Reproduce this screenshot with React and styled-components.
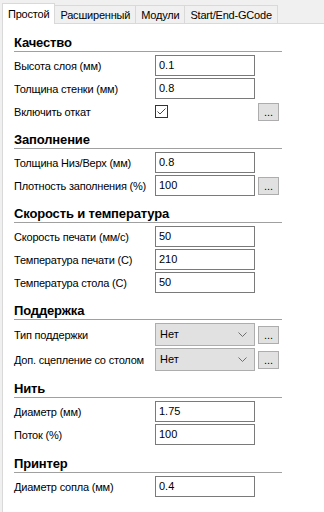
import React from "react";
import styled, { createGlobalStyle } from "styled-components";

const Global = createGlobalStyle`
  html, body { margin: 0; padding: 0; }
  body { font-family: "Liberation Sans", Arial, sans-serif; font-size: 11px; color: #000; background: #f0f0f0; }
`;

const Window = styled.div`
  height: 512px;
  overflow: hidden;
  background: #f0f0f0;
  padding: 2px 0 0 2px;
  box-sizing: border-box;
  display: flex;
  flex-direction: column;
`;

const TabBar = styled.div`
  display: flex;
  align-items: flex-end;
  height: 21px;
  border-bottom: 1px solid #d9d9d9;
  position: relative;
  z-index: 1;
`;

const Tab = styled.div`
  box-sizing: border-box;
  height: ${(p) => (p.$active ? "21px" : "18px")};
  margin-bottom: ${(p) => (p.$active ? "-1px" : "0")};
  margin-left: ${(p) => (p.$first ? "0" : "-1px")};
  padding: ${(p) => (p.$active ? "3px 5px 0 5px" : "2px 5px 0 5px")};
  border: 1px solid #d9d9d9;
  border-bottom: none;
  background: ${(p) => (p.$active ? "#ffffff" : "#f0f0f0")};
  font-size: 11px;
  letter-spacing: -0.2px;
  line-height: 14px;
  white-space: nowrap;
  position: relative;
  z-index: ${(p) => (p.$active ? 2 : 1)};
`;

const Panel = styled.div`
  flex: 1;
  background: #ffffff;
  border-left: 1px solid #d9d9d9;
  padding: 12px 0 0 11px;
`;

const Section = styled.section`
  display: flex;
  flex-direction: column;
  gap: 2px;
  margin-bottom: ${(p) => (p.$loose ? "12px" : "11px")};
`;

const Heading = styled.h3`
  margin: 0 0 1px 0;
  width: 268px;
  font-size: 13px;
  letter-spacing: -0.15px;
  font-weight: bold;
  line-height: 13px;
  padding-bottom: 2px;
  border-bottom: 1px solid #a0a0a0;
`;

const Row = styled.div`
  display: flex;
  align-items: center;
  height: ${(p) => (p.$tall ? "23px" : "21px")};
`;

const Label = styled.span`
  width: 141px;
  font-size: 11px;
  letter-spacing: -0.2px;
  white-space: nowrap;
`;

const Input = styled.div`
  box-sizing: border-box;
  width: 100px;
  height: 21px;
  border: 1px solid #7a7a7a;
  background: #fff;
  padding: 0 0 0 3px;
  font-size: 11px;
  line-height: 19px;
`;

const Select = styled.div`
  box-sizing: border-box;
  width: 100px;
  height: 23px;
  border: 1px solid #adadad;
  background: #e1e1e1;
  padding: 0 0 0 4px;
  font-size: 11px;
  line-height: 21px;
  display: flex;
  align-items: center;
  justify-content: space-between;
`;

const Chevron = styled.svg`
  width: 9px;
  height: 6px;
  margin-right: 7px;
`;

const Spacer = styled.div`
  width: 100px;
  display: flex;
  align-items: center;
`;

const CheckBox = styled.div`
  box-sizing: border-box;
  width: 13px;
  height: 13px;
  border: 1px solid #333;
  background: #fff;
  display: flex;
  align-items: center;
  justify-content: center;
`;

const DotsButton = styled.div`
  box-sizing: border-box;
  width: 21px;
  height: 18px;
  margin-left: 3px;
  border: 1px solid #adadad;
  background: #e1e1e1;
  font-size: 11px;
  line-height: 16px;
  text-align: center;
`;

const Field = ({ label, value, button }) => (
  <Row>
    <Label>{label}</Label>
    <Input>{value}</Input>
    {button && <DotsButton>...</DotsButton>}
  </Row>
);

const Choice = ({ label, value }) => (
  <Row $tall>
    <Label>{label}</Label>
    <Select>
      {value}
      <Chevron viewBox="0 0 9 6">
        <polyline points="0.5,0.5 4.5,4.5 8.5,0.5" fill="none" stroke="#6f6f6f" strokeWidth="1" />
      </Chevron>
    </Select>
    <DotsButton>...</DotsButton>
  </Row>
);

export default function App() {
  return (
    <>
      <Global />
      <Window>
        <TabBar>
          <Tab $active $first>Простой</Tab>
          <Tab>Расширенный</Tab>
          <Tab>Модули</Tab>
          <Tab>Start/End-GCode</Tab>
        </TabBar>
        <Panel>
          <Section>
            <Heading>Качество</Heading>
            <Field label="Высота слоя (мм)" value="0.1" />
            <Field label="Толщина стенки (мм)" value="0.8" />
            <Row>
              <Label>Включить откат</Label>
              <Spacer>
                <CheckBox>
                  <svg width="11" height="11" viewBox="0 0 11 11">
                    <polyline points="1.5,5.5 4,8 9.5,2.5" fill="none" stroke="#4a4a4a" strokeWidth="1" />
                  </svg>
                </CheckBox>
              </Spacer>
              <DotsButton>...</DotsButton>
            </Row>
          </Section>
          <Section>
            <Heading>Заполнение</Heading>
            <Field label="Толщина Низ/Верх (мм)" value="0.8" />
            <Field label="Плотность заполнения (%)" value="100" button />
          </Section>
          <Section>
            <Heading>Скорость и температура</Heading>
            <Field label="Скорость печати (мм/с)" value="50" />
            <Field label="Температура печати (С)" value="210" />
            <Field label="Температура стола (С)" value="50" />
          </Section>
          <Section>
            <Heading>Поддержка</Heading>
            <Choice label="Тип поддержки" value="Нет" />
            <Choice label="Доп. сцепление со столом" value="Нет" />
          </Section>
          <Section $loose>
            <Heading>Нить</Heading>
            <Field label="Диаметр (мм)" value="1.75" />
            <Field label="Поток (%)" value="100" />
          </Section>
          <Section>
            <Heading>Принтер</Heading>
            <Field label="Диаметр сопла (мм)" value="0.4" />
          </Section>
        </Panel>
      </Window>
    </>
  );
}
